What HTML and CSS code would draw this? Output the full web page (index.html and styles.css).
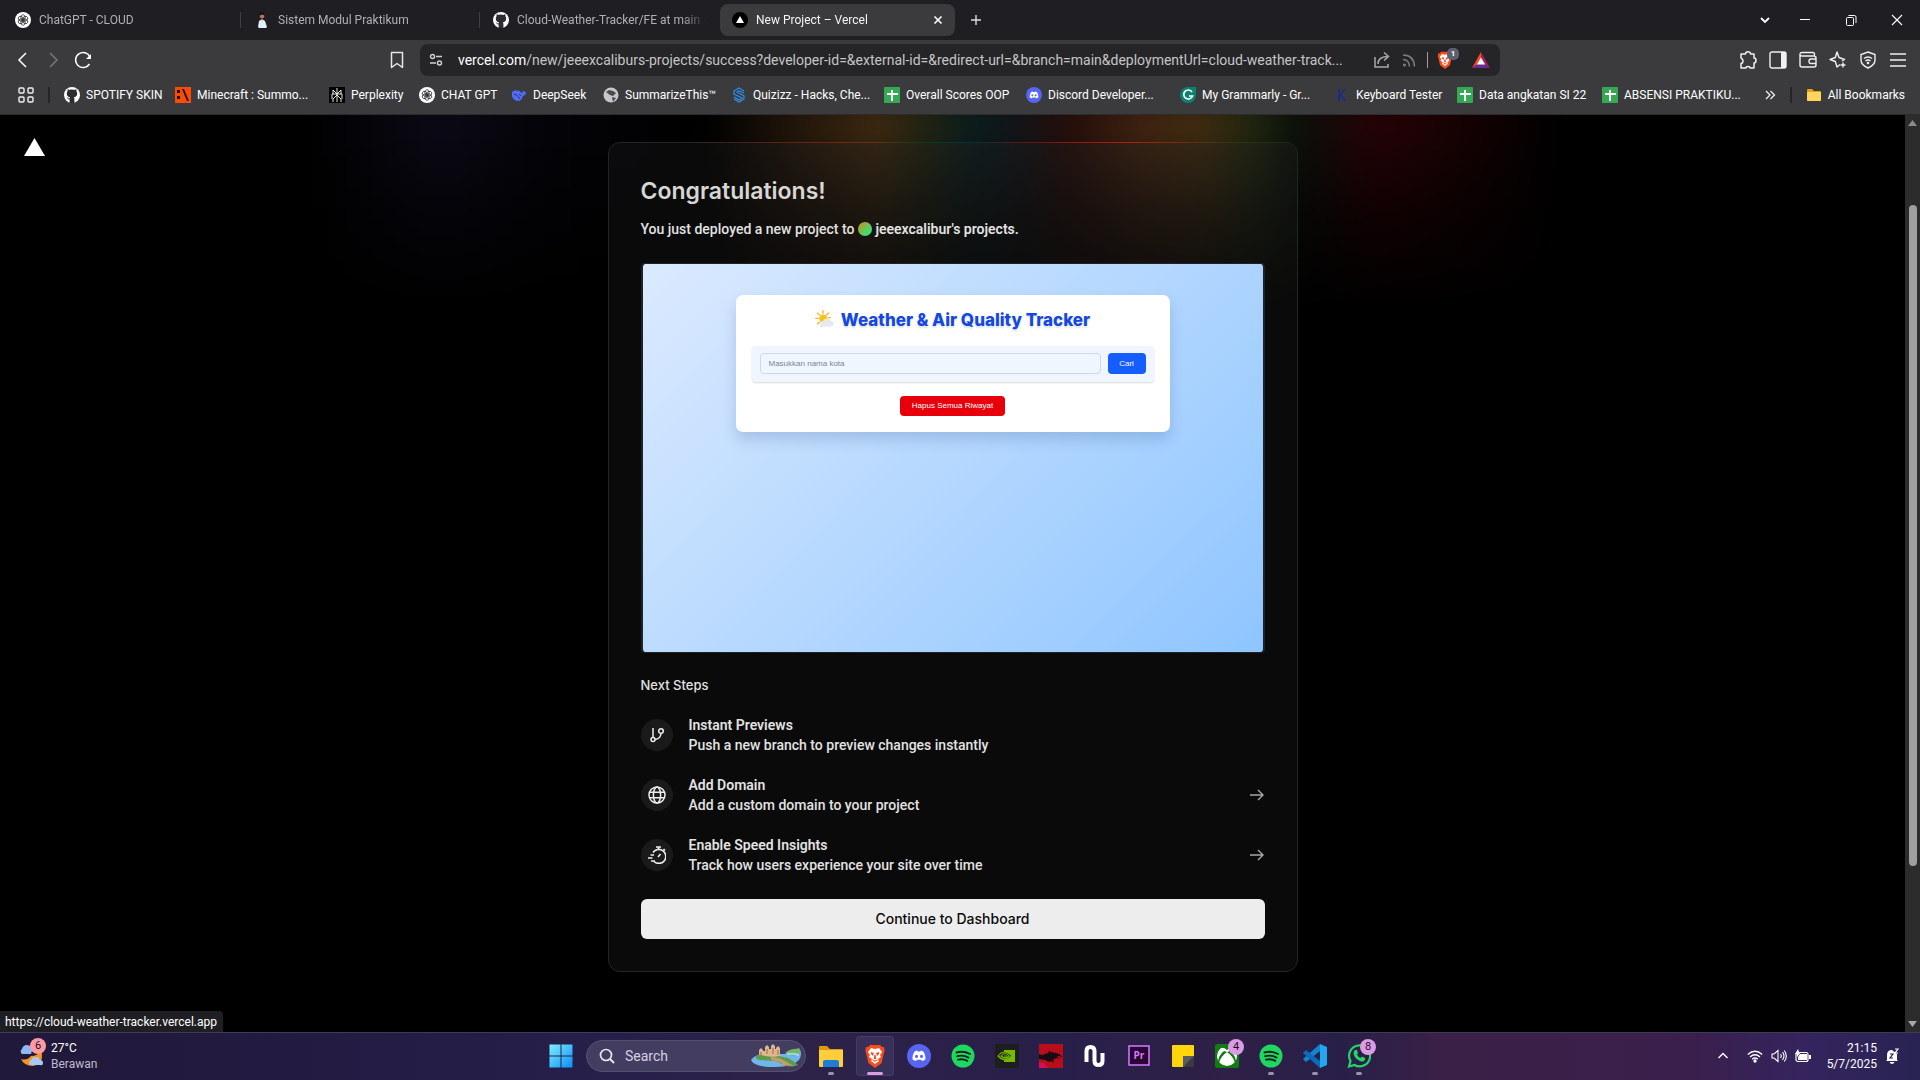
FILE: index.html
```html
<!DOCTYPE html>
<html lang="en">
<head>
<meta charset="utf-8">
<title>New Project – Vercel</title>
<link rel="stylesheet" href="styles.css">
</head>
<body>
<svg class="defs" aria-hidden="true">
  <symbol id="i-github" viewBox="0 0 16 16"><circle cx="8" cy="8" r="8" fill="#fff"/><path fill="#2b2b30" d="M8 2.600c-.9 0-1.600.1-2.200.3C4.700 2.200 4 2.100 3.700 2.200c-.3.800-.2 1.400 0 1.700-.6.700-.9 1.500-.9 2.500 0 2.700 1.600 3.600 3.300 3.900-.3.300-.5.700-.5 1.100-1 .4-1.700-.1-2.100-.8-.3-.4-.6-.6-1-.5.9.6.8 2.100 2.400 2.300l.7-.1V16h4.800v-4c0-.8-.2-1.300-.6-1.700 1.800-.3 3.400-1.200 3.400-3.900 0-1-.3-1.800-.9-2.500.2-.3.300-.9 0-1.700-.3-.1-1 0-2.100.7A8 8 0 0 0 8 2.600z"/></symbol>
  <symbol id="i-gpt" viewBox="0 0 16 16"><circle cx="8" cy="8" r="8" fill="#fff"/><g fill="none" stroke="#333" stroke-width=".8"><ellipse cx="8" cy="5.700" rx="2.200" ry="3"/><ellipse cx="8" cy="5.700" rx="2.200" ry="3" transform="rotate(60 8 8)"/><ellipse cx="8" cy="5.700" rx="2.200" ry="3" transform="rotate(120 8 8)"/><ellipse cx="8" cy="5.700" rx="2.200" ry="3" transform="rotate(180 8 8)"/><ellipse cx="8" cy="5.700" rx="2.200" ry="3" transform="rotate(240 8 8)"/><ellipse cx="8" cy="5.700" rx="2.200" ry="3" transform="rotate(300 8 8)"/></g></symbol>
  <symbol id="i-sheet" viewBox="0 0 16 16"><rect width="16" height="16" rx="1" fill="#34a853"/><path d="M7 3h2v3h5v2H9v6H7V8H3V6h4z" fill="#fff"/></symbol>
  <symbol id="i-discord" viewBox="0 0 24 24"><circle cx="12" cy="12" r="12" fill="#5865f2"/><path fill="#fff" d="M8.500 7l1.600-.4.5.9h2.800l.5-.9 1.600.4c1.700.7 3 4.300 3 8.300-1 1.200-2.500 1.700-3.500 1.700l-.8-1.300h-4.400L9 17c-1 0-2.500-.5-3.500-1.700 0-4 1.300-7.600 3-8.300z"/><ellipse cx="9.500" cy="12.400" rx="1.500" ry="1.700" fill="#5865f2"/><ellipse cx="14.500" cy="12.400" rx="1.500" ry="1.700" fill="#5865f2"/></symbol>
  <symbol id="i-brave" viewBox="0 0 20 24"><path fill="#fb4b1a" d="M5 1h10l2 2h2l.6 4-1 3-2 9L10 24l-6.600-5-2-9-1-3L1 3h2z"/><path fill="#fff" d="M10 5l4-1 3 4-2 3 1 2-3 2 1 2-4 3-4-3 1-2-3-2 1-2-2-3 3-4z"/><path fill="#fb4b1a" d="M6 8l3 1-1 3-2-2zM14 8l-3 1 1 3 2-2zM9.300 11h1.400l.6 4H8.700zM7 15l3 1.500 3-1.500-2 2.500H9z"/></symbol>
  <symbol id="i-spotify" viewBox="0 0 24 24"><circle cx="12" cy="12" r="11.500" fill="#1ed760"/><path d="M5.500 8.500q7-2 13.500 1.500M6.200 12.200q6-1.600 11.300 1.400M7 15.600q5-1.200 9.300 1.200" fill="none" stroke="#14241c" stroke-width="1.900" stroke-linecap="round"/></symbol>
  <symbol id="i-arrow" viewBox="0 0 16 16"><path d="M1 8h13M9 3l5 5-5 5" fill="none" stroke="currentColor" stroke-width="1.400"/></symbol>
</svg>

<header class="browser">
  <div class="tabstrip">
    <nav class="tabs" aria-label="Tabs">
      <a class="tab" href="#"><svg class="fav"><use href="#i-gpt"/></svg><span>ChatGPT - CLOUD</span></a>
      <a class="tab" href="#"><svg class="fav" viewBox="0 0 16 16"><path d="M5 16l-1-1 1-6 3-2 3 2 2 6-1 1z" fill="#e4eef8"/><circle cx="8" cy="4" r="2.400" fill="#b8765c"/><path d="M5.500 4Q5 0 8 0t2.600 3.500L8 2.400z" fill="#1a1210"/><path d="M7 7l1 2 1-2z" fill="#b8765c"/></svg><span>Sistem Modul Praktikum</span></a>
      <a class="tab" href="#"><svg class="fav"><use href="#i-github"/></svg><span>Cloud-Weather-Tracker/FE at main ·</span></a>
      <a class="tab tab-active" href="#" aria-current="page"><svg class="fav" viewBox="0 0 16 16"><circle cx="8" cy="8" r="8" fill="#000"/><path d="M8 4l4 7H4z" fill="#fff"/></svg><span>New Project – Vercel</span><svg class="close" viewBox="0 0 10 10"><path d="M1.500 1.500l7 7M8.500 1.500l-7 7" stroke="#fff" stroke-width="1.600"/></svg></a>
    </nav>
    <button class="icon-btn newtab" aria-label="New tab"><svg width="12" height="12" viewBox="0 0 12 12"><path d="M6 1v10M1 6h10" stroke="#ddd" stroke-width="1.400"/></svg></button>
    <div class="winctl">
      <button class="icon-btn" aria-label="Search tabs"><svg width="12" height="12" viewBox="0 0 12 12"><path d="M2 4l4 4 4-4" fill="none" stroke="#fff" stroke-width="1.800"/></svg></button>
      <button class="icon-btn" aria-label="Minimize"><svg width="12" height="12" viewBox="0 0 12 12"><path d="M1 5.500h10" stroke="#fff"/></svg></button>
      <button class="icon-btn" aria-label="Restore"><svg width="12" height="12" viewBox="0 0 12 12"><rect x="1.500" y="3.500" width="7" height="8" rx="1" fill="none" stroke="#fff"/><path d="M3.500 1.500h6q1.500 0 1.500 1.500v6" fill="none" stroke="#fff"/></svg></button>
      <button class="icon-btn" aria-label="Close"><svg width="12" height="12" viewBox="0 0 12 12"><path d="M1 1l10 10M11 1L1 11" stroke="#fff" stroke-width="1.100"/></svg></button>
    </div>
  </div>

  <div class="toolbar">
    <div class="nav-left">
      <button class="icon-btn" aria-label="Back"><svg width="18" height="18" viewBox="0 0 18 18"><path d="M12 2L5 9l7 7" fill="none" stroke="#fff" stroke-width="1.500"/></svg></button>
      <button class="icon-btn" aria-label="Forward"><svg width="18" height="18" viewBox="0 0 18 18"><path d="M6 2l7 7-7 7" fill="none" stroke="#77777b" stroke-width="1.500"/></svg></button>
      <button class="icon-btn" aria-label="Reload"><svg width="18" height="18" viewBox="0 0 18 18"><path d="M15.500 13A7.500 7.500 0 1 1 16 6" fill="none" stroke="#fff" stroke-width="1.600"/><path d="M17 3v5h-5z" fill="#fff"/></svg></button>
      <button class="icon-btn bookmark" aria-label="Bookmark this tab"><svg width="18" height="18" viewBox="0 0 18 18"><path d="M3.500 1.500h11v15L9 12.500l-5.500 4z" fill="none" stroke="#e6e6e8" stroke-width="1.500" stroke-linejoin="round"/></svg></button>
    </div>
    <div class="address">
      <svg class="tune" width="14" height="14" viewBox="0 0 14 14" fill="none" stroke="#d0d0d3" stroke-width="1.400"><circle cx="3.500" cy="3.500" r="2"/><path d="M7 3.500h6M1 10h6"/><circle cx="10.500" cy="10" r="2"/></svg>
      <p class="url"><b>vercel.com</b>/new/jeeexcaliburs-projects/success?developer-id=&amp;external-id=&amp;redirect-url=&amp;branch=main&amp;deploymentUrl=cloud-weather-track...</p>
      <div class="addr-icons">
        <svg width="18" height="18" viewBox="0 0 18 18" fill="none" stroke="#a9a9ad" stroke-width="1.500"><path d="M2 6v10h13v-3M5 13q0-7 9-7.500M11 1.500l4.500 4-4.500 4"/></svg>
        <svg width="18" height="18" viewBox="0 0 18 18" fill="none" stroke="#7c7c80" stroke-width="1.500"><circle cx="4.500" cy="14" r=".8"/><path d="M3 8.500q6 0 6.500 7M3 4q11 0 11.500 11.500"/></svg>
        <i class="addr-sep"></i>
        <span class="shield"><svg width="16" height="18"><use href="#i-brave"/></svg><b class="count">1</b></span>
        <svg width="18" height="16" viewBox="0 0 18 16"><path d="M9 0L0 16l9-6z" fill="#ff4724"/><path d="M9 0l9 16-9-6z" fill="#9e1f63"/><path d="M0 16h18l-9-6z" fill="#662d91"/><path d="M9 5.500L4.800 12.500h8.400z" fill="#fff"/></svg>
      </div>
    </div>
    <div class="nav-right">
      <button class="icon-btn" aria-label="Extensions"><svg width="18" height="18" viewBox="0 0 18 18"><path d="M2 3h4.500Q6.500.800 9 .800T11.500 3H15v4q2 0 2 2.500T15 12v5h-4q0-1.500-2-1.500T7 17H2v-4.500q2-.3 2-2.500T2 7z" fill="none" stroke="#f0f0f0" stroke-width="1.500" stroke-linejoin="round"/></svg></button>
      <button class="icon-btn" aria-label="Sidebar"><svg width="18" height="18" viewBox="0 0 18 18"><rect x="1" y="1" width="16" height="16" rx="2" fill="none" stroke="#f0f0f0" stroke-width="1.400"/><path d="M12 1h5v16h-5z" fill="#f0f0f0"/></svg></button>
      <button class="icon-btn" aria-label="Wallet"><svg width="18" height="18" viewBox="0 0 18 18" fill="none" stroke="#f0f0f0" stroke-width="1.400"><path d="M15.500 5V3q0-1.500-1.500-1.500H3Q1 1.500 1 3.300V14q0 2 2 2h12q2 0 2-2V7q0-2-2-2H3Q1 5 1 3.300M17 8h-5q-2 0-2 2.300t2 2.200h5"/></svg></button>
      <button class="icon-btn" aria-label="Leo AI"><svg width="18" height="18" viewBox="0 0 18 18" fill="none" stroke="#f0f0f0" stroke-width="1.400" stroke-linejoin="round"><path d="M11 13.500L8 16 6.300 10.500 1 8.500l5.300-2L8 1l2 5.500 5.500 2-2.500 1.500M14 11.500v5M11.500 14h5"/></svg></button>
      <button class="icon-btn" aria-label="VPN"><svg width="18" height="18" viewBox="0 0 18 18" fill="none" stroke="#f0f0f0" stroke-width="1.400"><path d="M9 1l7 2.500V9q0 5-7 8-7-3-7-8V3.500zM5 7.500q4-3 8 0M6.500 10q2.500-2 5 0"/><circle cx="9" cy="12" r=".6"/></svg></button>
      <button class="icon-btn" aria-label="Menu"><svg width="18" height="18" viewBox="0 0 18 18"><path d="M1 3h16M1 9h16M1 15h16" stroke="#f0f0f0" stroke-width="1.300"/></svg></button>
    </div>
  </div>

  <div class="bookmarks">
    <svg width="16" height="16" viewBox="0 0 16 16" fill="none" stroke="#f0f0f0" stroke-width="1.400"><rect x="1" y="1" width="5" height="5" rx="1"/><rect x="10" y="1" width="5" height="5" rx="1"/><rect x="1" y="10" width="5" height="5" rx="1"/><rect x="10" y="10" width="5" height="5" rx="1"/></svg>
    <i class="bm-sep"></i>
    <nav class="bm-list" aria-label="Bookmarks">
      <a href="#"><svg><use href="#i-github"/></svg>SPOTIFY SKIN</a>
      <a href="#"><svg viewBox="0 0 16 16"><rect width="16" height="16" fill="#ff4a00"/><path d="M2 3h3v3H2zM2 9h3v3H2zM7 2h2l5 12h-2z" fill="#111"/></svg>Minecraft : Summo...</a>
      <a href="#"><svg viewBox="0 0 16 16"><rect width="16" height="16" fill="#000"/><path d="M8 1v14M8 7L4 3v4M8 7l4-4v4M3 7h10v5M3 7v5M8 8l-4 4v3M8 8l4 4v3" fill="none" stroke="#fff" stroke-width=".9"/></svg>Perplexity</a>
      <a href="#"><svg><use href="#i-gpt"/></svg>CHAT GPT</a>
      <a href="#"><svg viewBox="0 0 16 16"><path d="M1 5q3-3 6-1 2-1 3 2 2 0 2-2l3 1q0 3-3 4-1 4-4 5-6 0-7-5z" fill="#4d6bfe"/><path d="M3 7q3 0 6 5M8 7l2 2" stroke="#3b3b3e" fill="none"/></svg>DeepSeek</a>
      <a href="#"><svg viewBox="0 0 16 16"><circle cx="8" cy="8" r="7.500" fill="#c4c7cc"/><path d="M6 3l4 1 3 2-3 3-3-1-4-3zM9 10l4 1-3 4z" fill="#4a4a4e"/></svg>SummarizeThis™</a>
      <a href="#"><svg viewBox="0 0 16 16" fill="none" stroke="#2e8ce0" stroke-width="1.300"><path d="M13 4L8 1 3 4v3l8 4-3 2-5-3M13 6L8 4 6 5l7 4v3l-5 3-5-3"/></svg>Quizizz - Hacks, Che...</a>
      <a href="#"><svg><use href="#i-sheet"/></svg>Overall Scores OOP</a>
      <a href="#"><svg><use href="#i-discord"/></svg>Discord Developer...</a>
      <a href="#"><svg viewBox="0 0 16 16"><path d="M8 0h8v8a8 8 0 1 1-8-8z" fill="#0b8270"/><path d="M12 5A4.500 4.500 0 1 0 12.500 9H9" fill="none" stroke="#fff" stroke-width="1.700"/></svg>My Grammarly - Gr...</a>
      <a href="#"><svg viewBox="0 0 16 16"><path d="M5 2v12M11.500 2L6 8l5.500 6" fill="none" stroke="#1a2b8c" stroke-width="1.800"/></svg>Keyboard Tester</a>
      <a href="#"><svg><use href="#i-sheet"/></svg>Data angkatan SI 22</a>
      <a href="#"><svg><use href="#i-sheet"/></svg>ABSENSI PRAKTIKU...</a>
    </nav>
    <div class="bm-end">
      <button class="icon-btn" aria-label="More bookmarks"><svg width="12" height="12" viewBox="0 0 12 12"><path d="M2 2l4 4-4 4M6.500 2l4 4-4 4" fill="none" stroke="#f0f0f0" stroke-width="1.300"/></svg></button>
      <i class="bm-sep"></i>
      <a href="#"><svg viewBox="0 0 16 16"><path d="M1 3q0-1 1-1h4l2 2h6q1 0 1 1v8q0 1-1 1H2q-1 0-1-1z" fill="#e0a020"/><rect x="1" y="5" width="14" height="9" rx="1" fill="#ffd65c"/></svg>All Bookmarks</a>
    </div>
  </div>
</header>

<div class="viewport">
  <main class="page">
    <div class="glow" aria-hidden="true"></div>
    <a class="brand" href="#" aria-label="Vercel"><svg width="21" height="18" viewBox="0 0 21 18"><path d="M10.500 0L21 18H0z" fill="#fff"/></svg></a>
    <section class="card">
      <h1>Congratulations!</h1>
      <p class="sub">You just deployed a new project to <i class="avatar"></i> <b>jeeexcalibur's projects.</b></p>
      <div class="preview">
        <div class="app">
          <h2><svg width="20" height="20" viewBox="0 0 20 20"><g stroke="#f9b233" stroke-width="1.400" stroke-linecap="round"><path d="M8 .8v2.400M2.600 3l1.700 1.700M13.400 3l-1.700 1.700M.8 8.400h2.400M2.600 14l1.700-1.700M15 7.500l-1.600.4M6.500 16l.4-1.600"/></g><circle cx="8.200" cy="8.500" r="4" fill="#fcc21b"/><path d="M8 16.500a2.700 2.700 0 0 1 .2-5.400 4 4 0 0 1 7.300-.3 2.900 2.900 0 0 1 .9 5.700z" fill="#e4eaee"/></svg>Weather &amp; Air Quality Tracker</h2>
          <form class="panel">
            <input type="text" placeholder="Masukkan nama kota" aria-label="Masukkan nama kota">
            <button type="button" class="go">Cari</button>
          </form>
          <button class="clear">Hapus Semua Riwayat</button>
        </div>
      </div>
      <h3>Next Steps</h3>
      <ul class="steps">
        <li><span class="disc"><svg width="16" height="16" viewBox="0 0 16 16" fill="none" stroke="#ededed" stroke-width="1.500"><path d="M4 1v9.500M6 12.500q5.500-.5 6-6"/><circle cx="4" cy="12.500" r="2"/><circle cx="12" cy="4" r="2.300"/></svg></span><div><b>Instant Previews</b><p>Push a new branch to preview changes instantly</p></div></li>
        <li><span class="disc"><svg width="18" height="18" viewBox="0 0 18 18" fill="none" stroke="#ededed" stroke-width="1.500"><circle cx="9" cy="9" r="8"/><ellipse cx="9" cy="9" rx="3.600" ry="8"/><path d="M1.500 6.300h15M1.500 11.700h15"/></svg></span><div><b>Add Domain</b><p>Add a custom domain to your project</p></div><a href="#" aria-label="Add Domain"><svg width="16" height="16"><use href="#i-arrow"/></svg></a></li>
        <li><span class="disc"><svg width="18" height="18" viewBox="0 0 18 18" fill="none" stroke="#ededed" stroke-width="1.600"><path d="M5 6.500A7 7 0 1 1 6 15.500M8 1h5M10.500 1v2.500M15.500 3l1.500 1.500M10 11l2.500-3M2.500 9h3.500M0 12h4.500M3 15h4"/></svg></span><div><b>Enable Speed Insights</b><p>Track how users experience your site over time</p></div><a href="#" aria-label="Enable Speed Insights"><svg width="16" height="16"><use href="#i-arrow"/></svg></a></li>
      </ul>
      <button class="continue">Continue to Dashboard</button>
    </section>
    <div class="status">https://cloud-weather-tracker.vercel.app</div>
  </main>
  <div class="scrollbar" aria-hidden="true">
    <svg width="9" height="6" viewBox="0 0 9 6"><path d="M4.500 0L9 6H0z" fill="#8a8a8a"/></svg>
    <div class="track"><div class="thumb"></div></div>
    <svg width="9" height="6" viewBox="0 0 9 6"><path d="M0 0h9L4.500 6z" fill="#a8a8a8"/></svg>
  </div>
</div>

<footer class="taskbar">
  <div class="weather">
    <span class="wicon"><svg width="24" height="24" viewBox="0 0 24 24"><path d="M12 12q7 0 9-5l2 3q1 10-9 12-9 0-12-7 6 2 10-3z" fill="#f7931e"/><path d="M3 10a3 3 0 0 1 0-5q1-4 5-4 5 0 5 6l-1 3z" fill="#8db8f2"/><path d="M11 21a3 3 0 0 1 1-5q2-4 5-3 3 0 4 3 3 0 3 3t-3 2z" fill="#a8c8fa"/></svg><b class="badge badge-pink">6</b></span>
    <div><p>27°C</p><p class="dim">Berawan</p></div>
  </div>
  <div class="apps">
    <button class="app-btn" aria-label="Start"><svg viewBox="0 0 24 24"><defs><linearGradient id="w" x1="0" y1="0" x2="1" y2="1"><stop offset="0" stop-color="#7ff0ff"/><stop offset="1" stop-color="#0a8df8"/></linearGradient></defs><path d="M.5.500h11v11H.5zM12.500.500h11v11h-11zM.5 12.500h11v11H.5zM12.500 12.500h11v11h-11z" fill="url(#w)"/></svg></button>
    <label class="search"><svg width="16" height="16" viewBox="0 0 16 16"><circle cx="7" cy="7" r="5.500" fill="none" stroke="#e8e6f0" stroke-width="1.700"/><path d="M11 11l4 4" stroke="#e8e6f0" stroke-width="2"/></svg><input type="text" placeholder="Search"><svg width="50" height="24" viewBox="0 0 50 24"><path d="M0 16q4-6 14-6h20l14-6q4 6 0 12-6 7-24 7Q2 23 0 16z" fill="#6db7ea"/><path d="M5 12q8-3 18-1l14 3q6 3 10 7-8 3-14 0l-8-4-16-1q-5-1-4-4z" fill="#5f9a4a"/><path d="M20 13q8 0 14 4 4 3 10 5l-12-1q-2-4-12-5z" fill="#c99a68"/><path d="M8 11V6l2-2 2 2v1h2V3l2-2 2 2v2h2V2l2-2 2 2v3h1V4l2-2 2 2v8q-10 2-19-1z" fill="#dcb88c"/><path d="M10 8v3M16 5v5M22 4v6M27 6v5" stroke="#9a6a48"/><path d="M34 9q6-5 14-4l2 4-8 3z" fill="#78b45a"/><path d="M36 10q6-1 12 1" stroke="#9ad4f4" stroke-width="2" fill="none"/></svg></label>
    <button class="app-btn run" aria-label="File Explorer"><svg viewBox="0 0 24 24"><path d="M0 3q0-1 1-1h7l3 3h12q1 0 1 1v6H0z" fill="#dc9a0c"/><path d="M0 6h24v16q0 1-1 1H1q-1 0-1-1z" fill="#ffce3d"/><path d="M4 23v-5q0-2 2-2h12q2 0 2 2v5z" fill="#1c7ed8"/></svg></button>
    <button class="app-btn active" aria-label="Brave"><svg viewBox="0 0 20 24"><use href="#i-brave"/></svg></button>
    <button class="app-btn" aria-label="Discord"><svg><use href="#i-discord"/></svg></button>
    <button class="app-btn" aria-label="Spotify"><svg><use href="#i-spotify"/></svg></button>
    <button class="app-btn" aria-label="NVIDIA"><svg viewBox="0 0 24 24"><rect width="24" height="24" fill="#1e1e1e"/><path d="M9 6h11v12H9z" fill="#76b900"/><path d="M3 12q6-8 14 0-8 7-14 0z" fill="#1e1e1e" stroke="#76b900" stroke-width="1.200"/><path d="M6 12q4-5 8 0-4 4-8 0zM9 12h3" fill="none" stroke="#76b900" stroke-width="1.200"/></svg></button>
    <button class="app-btn" aria-label="Red Dragon"><svg viewBox="0 0 24 24"><rect width="24" height="24" fill="#b80e1a"/><path d="M0 10l3 1 6-2 1-2 2 1 5 1 3 1 4 3-5-1-1 1 4 2-5-1-3 2 1 3-3-2-2 1-4-2-6-1z" fill="#1c0a12"/><path d="M0 18l5 1 4 5H0z" fill="#d01050"/></svg></button>
    <button class="app-btn" aria-label="Music"><svg viewBox="0 0 24 24"><path d="M3.500 18V7q0-4 4-4t4 4v10q0 4 4 4t4-4V9" fill="none" stroke="#fff" stroke-width="4"/></svg></button>
    <button class="app-btn" aria-label="Premiere Pro"><svg viewBox="0 0 24 24"><rect x="2" y="2" width="20" height="19" fill="#2a0634" stroke="#d67bff" stroke-width="1.500"/><text x="12" y="15" text-anchor="middle" class="pr">Pr</text></svg></button>
    <button class="app-btn" aria-label="Sticky Notes"><svg viewBox="0 0 24 24"><path d="M1 2q0-1 1-1h20q1 0 1 1v20q0 1-1 1H2q-1 0-1-1z" fill="#ffd60a"/><path d="M12 12h11v11H12z" fill="#3a3a42"/><path d="M12 23V12h11z" fill="#5a5a62"/></svg></button>
    <button class="app-btn" aria-label="Xbox"><svg viewBox="0 0 24 24"><rect width="24" height="24" rx="2" fill="#107c10"/><circle cx="12" cy="12" r="10" fill="#fff"/><path d="M5 4q4-1 7 2 3-3 7-2-3-2.500-7-2.500T5 4zM12 8q-6 4-8 11l-1-2q1-6 6-10zM12 8q6 4 8 11l1-2q-1-6-6-10z" fill="#107c10"/></svg><b class="badge">4</b></button>
    <button class="app-btn run" aria-label="Spotify"><svg><use href="#i-spotify"/></svg></button>
    <button class="app-btn run" aria-label="Visual Studio Code"><svg viewBox="0 0 24 24"><path d="M17 0l7 3v18l-7 3z" fill="#22a7f2"/><path d="M17 0v7L3 18l-3-3z" fill="#1584d0"/><path d="M17 24v-7L3 6 0 9z" fill="#0a6cb8"/></svg></button>
    <button class="app-btn run" aria-label="WhatsApp"><svg viewBox="0 0 24 24"><path d="M2 22.500l1.500-5.500a10.500 10.500 0 1 1 4 4z" fill="none" stroke="#25d366" stroke-width="2.200"/><path d="M8 6l2 0 1 3-1 1.500q1 2.500 3.700 3.500L15 12.500l3 1.500v2q-2 2.500-5 1Q8 15 6.500 10q-.4-2.600 1.500-4z" fill="#25d366"/></svg><b class="badge">8</b></button>
  </div>
  <div class="tray">
    <svg width="12" height="12" viewBox="0 0 12 12"><path d="M1.500 8L6 3.500 10.500 8" fill="none" stroke="#fff" stroke-width="1.400"/></svg>
    <div class="tray-icons">
      <svg width="16" height="16" viewBox="0 0 16 16" fill="none" stroke="#fff" stroke-width="1.300"><path d="M.8 6.500q7.200-6.500 14.400 0M3 9q5-4.500 10 0M5.200 11.300q2.800-2.500 5.600 0"/><circle cx="8" cy="13" r="1" fill="#fff"/></svg>
      <svg width="16" height="16" viewBox="0 0 16 16" fill="none" stroke="#fff" stroke-width="1.100"><path d="M1 6h2l4-3.500v11L3 10H1zM9.500 6q1.500 2 0 4M11.500 4.200q3 3.800 0 7.600M13.300 2.500q4 5.500 0 11"/></svg>
      <svg width="16" height="16" viewBox="0 0 16 16"><rect x="1" y="4.500" width="12" height="9" rx="2" fill="none" stroke="#fff" stroke-width="1.200"/><path d="M5 6h7v6H3V9zM14 7h2v4h-2zM3 1L0 6h2v3l4-5H4z" fill="#fff"/></svg>
    </div>
    <div class="clock"><p>21:15</p><p>5/7/2025</p></div>
    <svg width="16" height="16" viewBox="0 0 16 16"><path d="M3 12V7q0-5 5-5l5 4v6l1 1H2zM5.500 14h5q-1 2-2.500 2t-2.500-2z" fill="#fff"/><path d="M6 6h3l-3 4h3" stroke="#2d2355" fill="none" stroke-width="1.200"/><path d="M11 1h3l-3 4h3" stroke="#fff" fill="none" stroke-width="1.200"/></svg>
  </div>
</footer>
</body>
</html>
```
FILE: styles.css
```css
* { box-sizing: border-box; margin: 0; padding: 0; }

body {
  height: 100vh;
  display: flex;
  flex-direction: column;
  overflow: hidden;
  background: #000;
  color: #fff;
  font: 12px/16px Roboto, "Noto Sans", sans-serif;
}

button, input { font: inherit; color: inherit; border: 0; background: none; }
a { color: inherit; text-decoration: none; }
ul { list-style: none; }
svg { display: block; flex: none; }
.defs { position: absolute; width: 0; height: 0; }
.icon-btn { display: grid; place-items: center; }

/* Browser chrome */
.browser { flex: none; background: #3b3b3e; border-bottom: 1px solid #2c2c2f; }

.tabstrip { display: flex; align-items: center; height: 40px; padding-left: 3px; background: #1f1f23; }
.tabs { display: flex; gap: 4px; }
.tab {
  display: flex; align-items: center; gap: 8px;
  width: 235px; height: 32px; padding: 0 12px;
  border-radius: 8px; color: #b0b0b3;
  position: relative;
}
.tab span { flex: 1; white-space: nowrap; mask-image: linear-gradient(to right, #000 calc(100% - 24px), transparent); }
.tab:nth-child(2)::before, .tab:nth-child(3)::before {
  content: ""; position: absolute; left: -2px; top: 8px; width: 1px; height: 16px; background: #3f3f44;
}
.tab-active { background: #3b3b3e; color: #f4f4f4; }
.fav { width: 16px; height: 16px; }
.close { width: 10px; height: 10px; }
.newtab { width: 42px; height: 32px; }
.winctl { display: flex; margin-left: auto; }
.winctl .icon-btn { width: 46px; height: 40px; }
.winctl .icon-btn:first-child { width: 34px; }

.toolbar { display: grid; grid-template-columns: 1fr minmax(0, 1080px) 1fr; align-items: center; height: 40px; }
.nav-left { display: flex; gap: 12px; padding: 0 14px; }
.bookmark { margin-left: auto; }
.address { display: flex; align-items: center; height: 32px; padding: 0 10px 0 9px; border-radius: 8px; background: #252528; }
.tune { margin-right: 15px; }
.url { flex: 1; white-space: nowrap; font-size: 14px; line-height: 20px; color: #c4c4c6; }
.url b { font-weight: 400; color: #fff; }
.addr-icons { display: flex; align-items: center; gap: 9px; }
.addr-sep { width: 1px; height: 16px; background: #a0a0a4; }
.shield { position: relative; margin-right: 10px; }
.count {
  position: absolute; left: 10px; top: -3px; width: 12px; height: 12px;
  border-radius: 5px; background: #5d6070; font-size: 8px; line-height: 12px; text-align: center;
}
.nav-right { display: flex; justify-content: flex-end; gap: 12px; padding-right: 13px; }

.bookmarks { display: flex; align-items: center; height: 34px; padding: 0 15px 4px 18px; }
.bm-sep { width: 2px; height: 16px; background: #252528; }
.bookmarks > .bm-sep { margin: 0 14px; }
.bm-list {
  display: grid; flex: 1; min-width: 0;
  grid-template-columns: 111px 154px 90px 92px 92px 128px 153px 142px 154px 154px 123px 145px auto;
}
.bookmarks a { display: flex; align-items: center; gap: 6px; white-space: nowrap; }
.bookmarks a svg { width: 16px; height: 16px; }
.bm-end { display: flex; align-items: center; gap: 14px; }

/* Page */
.viewport { flex: 1; min-height: 0; display: flex; }
.page { flex: 1; position: relative; overflow: hidden; padding-top: 27px; }
.glow {
  position: absolute; inset: -20px 0 auto; height: 240px;
  background: linear-gradient(to right,
    transparent 16%, #0b0915 23%, #040308 29%, transparent 37%,
    #23160a 42%, #3b2710 46%, #262410 48%, #0a1c1c 51%, #10151a 53%,
    #240d0a 56%, #3d2210 60%, #3e2a10 63%, #1c240e 66%, #0a100a 68%,
    #240206 72%, #1c0204 75%, transparent 82%);
  mask-image: linear-gradient(#000 15%, rgba(0, 0, 0, .45) 50%, transparent 90%);
  filter: blur(12px);
}
.brand { position: absolute; left: 24px; top: 23px; }
.card {
  position: relative;
  width: 690px; max-width: 100%; margin: 0 auto; padding: 32px;
  border: 1px solid #222426; border-radius: 12px;
  background: rgba(42, 42, 42, .24);
  font-size: 14px; line-height: 20px; color: #e2e2e2;
}
.card::before {
  content: ""; position: absolute; left: 11px; right: 11px; top: -1px; height: 1px;
  background: linear-gradient(to right, transparent 10%, #6e2410 30%, #6a3010 38%, #0a3a20 46%, #0a2c3c 53%, #701410 62%, #b0220e 76%, #6a3010 85%, #2c3a10 92%, transparent);
}
h1 { font: 600 23px/32px Inter, sans-serif; color: #d8d6d4; }
.sub { margin-top: 10px; line-height: 24px; font-weight: 500; }
.sub b { font-weight: 600; }
.avatar { display: inline-block; width: 14px; height: 14px; border-radius: 50%; vertical-align: -2px; background: linear-gradient(135deg, #d08a20, #3ce070 75%); }

.preview {
  height: 390px; margin-top: 22px; padding-top: 31px;
  border: solid #1c2228; border-width: 1px 2px; border-radius: 4px;
  background: linear-gradient(135deg, #dbeafe, #8ec5ff) padding-box;
}
.app {
  display: flex; flex-direction: column; align-items: center;
  width: 70%; margin: 0 auto; padding: 13px 16px 16px;
  border-radius: 7px; background: #fff;
  box-shadow: 0 8px 14px rgba(30, 60, 120, .18);
}
h2 { display: flex; align-items: center; gap: 6px; font: 800 17px/24px Inter, sans-serif; color: #1447e6; white-space: nowrap; text-shadow: 0 2px 2px rgba(0, 0, 0, .12); }
.panel {
  display: flex; gap: 7px; width: 100%; margin-top: 14px; padding: 7px 8px 8px;
  border-radius: 4px; background: #eff6ff; box-shadow: 0 1px 2px rgba(0, 0, 0, .15);
}
.panel, .clear { font-family: "Liberation Sans", Arial, sans-serif; font-size: 8px; }
.panel input { flex: 1; min-width: 0; height: 21px; padding: 0 8px; border: 1px solid #cfd8e6; border-radius: 4px; }
.panel input::placeholder { color: #7d8694; opacity: 1; }
.go { width: 38px; border-radius: 4px; background: #155dfc; color: #fff; }
.clear { height: 20px; margin-top: 14px; padding: 0 12px; border-radius: 4px; background: #e7000b; color: #fff; line-height: 20px; }

h3 { margin-top: 22px; font: 500 13px/20px Inter, sans-serif; }
.steps { display: grid; gap: 20px; margin-top: 20px; }
.steps li { display: flex; align-items: center; gap: 16px; font-weight: 500; }
.steps b { font-weight: 600; }
.steps div { flex: 1; }
.steps a { color: #a8a8a8; }
.disc { display: grid; place-items: center; width: 32px; height: 32px; border-radius: 50%; background: #1a1a1a; }
.continue { width: 100%; height: 40px; margin-top: 24px; border-radius: 6px; background: #ededed; color: #0a0a0a; font: 500 14px/20px Inter, sans-serif; }

.status { position: absolute; left: 0; bottom: 0; padding: 3px 6px 2px 5px; border-top-right-radius: 4px; background: #1f1f23; }

.scrollbar { display: flex; flex-direction: column; align-items: center; width: 15px; padding: 5px 0; background: #2c2c2c; }
.track { flex: 1; padding-top: 79px; }
.thumb { width: 8px; height: 81%; border-radius: 4px; background: #9f9f9f; }

/* Taskbar */
.taskbar {
  flex: none; display: grid; grid-template-columns: 1fr auto 1fr; align-items: center; height: 48px;
  padding-bottom: 1px; border-top: 1px solid #3f3a58;
  background: linear-gradient(to right, #20193b, #221a40 15%, #251f4a 30%, #2d2248 42%, #281f4a 55%, #2e2046 64%, #281f48 70%, #3a2046 75%, #3a1f4c 88%, #35245e 94%, #282352);
}
.weather { display: flex; gap: 8px; padding-left: 19px; }
.wicon { position: relative; }
.wicon svg { margin-top: 4px; }
.dim { color: #c0bccd; }
.apps { display: flex; align-items: center; gap: 6px; }
.app-btn { position: relative; display: grid; place-items: center; width: 38px; height: 40px; border-radius: 4px; }
.app-btn > svg { width: 24px; height: 24px; }
.run::after, .active::after {
  content: ""; position: absolute; left: 16px; bottom: 1px; width: 6px; height: 3px; border-radius: 2px; background: #9a94ab;
}
.active { background: #383058; box-shadow: inset 0 0 0 1px #453c66; }
.active::after { left: 11px; width: 16px; background: #dc9be4; }
.badge {
  position: absolute; right: 2px; top: 3px; width: 16px; height: 16px; border-radius: 50%;
  background: #dc9be4; color: #1a1024; font-size: 11px; line-height: 16px; font-weight: 400; text-align: center;
}
.badge-pink { right: -3px; top: -2px; background: #ff99a4; }
.search {
  display: flex; align-items: center; gap: 10px; width: 220px; height: 32px; padding: 0 4px 0 12px;
  border: 1px solid #56506e; border-radius: 16px; background: #443d62;
}
.search input { flex: 1; min-width: 0; font-size: 14px; }
.search input::placeholder { color: #d4d0e0; opacity: 1; }
.pr { font: 700 10px "Open Sans", sans-serif; fill: #d67bff; }
.tray { display: flex; align-items: center; justify-content: flex-end; padding-right: 20px; }
.tray-icons { display: flex; gap: 8px; margin: 0 16px 0 18px; }
.clock { margin-right: 7px; text-align: right; }
```
